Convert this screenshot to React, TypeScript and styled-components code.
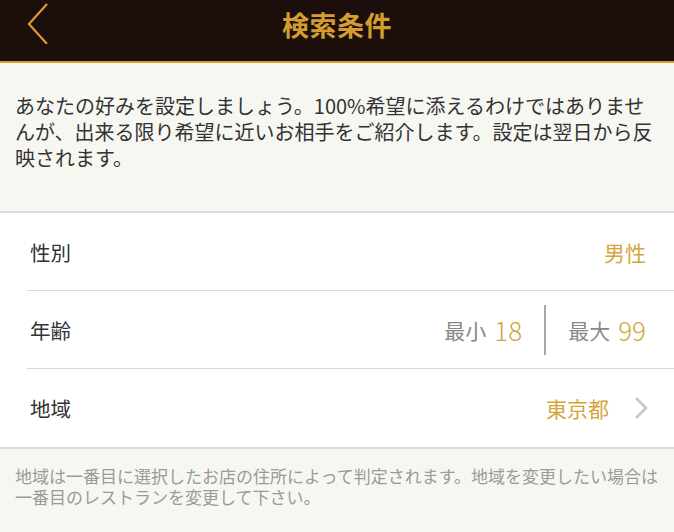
import React from "react";
import styled, { createGlobalStyle } from "styled-components";

const GlobalStyle = createGlobalStyle`
  html, body {
    margin: 0;
    padding: 0;
    background: #f7f7f2;
  }
  body {
    font-family: "Noto Sans CJK JP", "Noto Sans", sans-serif;
    -webkit-font-smoothing: antialiased;
  }
  * { box-sizing: border-box; }
`;

const Page = styled.div`
  width: 674px;
  min-height: 532px;
  background: #f7f7f2;
  display: flex;
  flex-direction: column;
`;

const Header = styled.header`
  position: relative;
  height: 63px;
  background: #1c0f0b;
  border-bottom: 2px solid #d79f2c;
  display: flex;
  align-items: center;
  justify-content: center;
`;

const BackButton = styled.button`
  position: absolute;
  left: 24px;
  top: 1px;
  width: 28px;
  height: 44px;
  padding: 0;
  border: none;
  background: transparent;
  display: flex;
  align-items: center;
  justify-content: center;
`;

const Title = styled.h1`
  margin: 0 0 12px;
  font-size: 27px;
  font-weight: 700;
  color: #d59d2f;
  letter-spacing: 0.5px;
`;

const Intro = styled.p`
  margin: 0;
  padding: 30px 15px 40px;
  font-size: 20px;
  line-height: 26px;
  color: #333;
`;

const List = styled.ul`
  list-style: none;
  margin: 0;
  padding: 0;
  background: #fff;
  border-top: 2px solid #dcd8d4;
  border-bottom: 2px solid #dedbd8;
`;

const Row = styled.li<{ $last?: boolean }>`
  height: 78px;
  margin-left: 27px;
  padding: 0 28px 0 3px;
  display: flex;
  align-items: center;
  justify-content: space-between;
  border-bottom: ${(p) => (p.$last ? "none" : "1px solid #d9d9d9")};
`;

const Label = styled.span`
  font-size: 20.5px;
  color: #333;
`;

const Value = styled.span`
  font-size: 21px;
  color: #d4a53d;
`;

const Num = styled.span`
  font-size: 26px;
  font-weight: 300;
  line-height: 1;
  color: #d4a53d;
`;

const Muted = styled.span`
  font-size: 21px;
  color: #888;
`;

const RangeGroup = styled.div`
  display: flex;
  align-items: center;
`;

const RangeItem = styled.div`
  display: flex;
  align-items: center;
  gap: 8px;
`;

const Divider = styled.div`
  width: 2px;
  height: 50px;
  background: #aea4a1;
  margin: 0 22px;
`;

const LinkValue = styled.div`
  display: flex;
  align-items: center;
  gap: 25px;
  margin-right: -2px;
`;

const Note = styled.p`
  margin: 0;
  padding: 16px 15px 20px;
  font-size: 17px;
  line-height: 21px;
  color: #9a9a9a;
`;

export default function App() {
  return (
    <Page>
      <GlobalStyle />
      <Header>
        <BackButton aria-label="戻る">
          <svg width="22" height="42" viewBox="0 0 22 42">
            <polyline
              points="20,2 2,22 20,42"
              fill="none"
              stroke="#d59d2f"
              strokeWidth="2.2"
            />
          </svg>
        </BackButton>
        <Title>検索条件</Title>
      </Header>
      <Intro>
        あなたの好みを設定しましょう。100%希望に添えるわけではありませんが、出来る限り希望に近いお相手をご紹介します。設定は翌日から反映されます。
      </Intro>
      <List>
        <Row>
          <Label>性別</Label>
          <Value>男性</Value>
        </Row>
        <Row>
          <Label>年齢</Label>
          <RangeGroup>
            <RangeItem>
              <Muted>最小</Muted>
              <Num>18</Num>
            </RangeItem>
            <Divider />
            <RangeItem>
              <Muted>最大</Muted>
              <Num>99</Num>
            </RangeItem>
          </RangeGroup>
        </Row>
        <Row $last>
          <Label>地域</Label>
          <LinkValue>
            <Value>東京都</Value>
            <svg width="14" height="24" viewBox="0 0 14 24">
              <polyline
                points="2,2 12,12 2,22"
                fill="none"
                stroke="#c6c6c6"
                strokeWidth="2.6"
              />
            </svg>
          </LinkValue>
        </Row>
      </List>
      <Note>
        地域は一番目に選択したお店の住所によって判定されます。地域を変更したい場合は一番目のレストランを変更して下さい。
      </Note>
    </Page>
  );
}
